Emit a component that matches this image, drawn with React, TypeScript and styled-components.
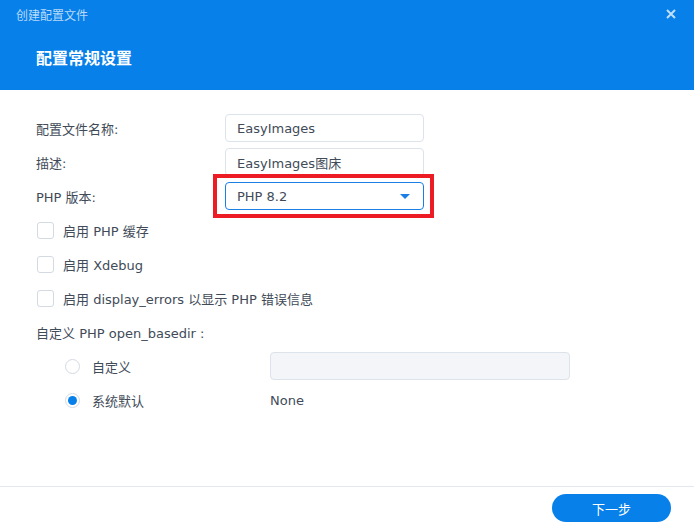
import styled, { createGlobalStyle } from "styled-components"

const Global = createGlobalStyle`
  html, body {
    margin: 0;
    padding: 0;
    background: #ffffff;
  }
  body {
    font-family: "DejaVu Sans", "Noto Sans CJK SC", sans-serif;
    color: #414b58;
  }
`

const Dialog = styled.div`
  width: 694px;
  height: 529px;
  display: flex;
  flex-direction: column;
  background: #ffffff;
  overflow: hidden;
`

const Header = styled.div`
  height: 90px;
  background: #0780ea;
  display: flex;
  flex-direction: column;
`

const TopBar = styled.div`
  height: 28px;
  display: flex;
  align-items: center;
  justify-content: space-between;
  padding: 0 18px 0 16px;
`

const WindowTitle = styled.div`
  font-family: "Noto Sans CJK SC", sans-serif;
  font-size: 12px;
  color: rgba(255, 255, 255, 0.72);
`

const Close = styled.div`
  color: rgba(255, 255, 255, 0.75);
  display: flex;
  align-items: center;
`

const Heading = styled.div`
  font-family: "Noto Sans CJK SC", sans-serif;
  font-size: 16px;
  font-weight: 700;
  color: #ffffff;
  padding: 17px 0 0 36px;
`

const Body = styled.div`
  flex: 1;
  padding: 24px 0 0 36px;
  display: flex;
  flex-direction: column;
`

const Fields = styled.div`
  display: flex;
  flex-direction: column;
  gap: 6px;
`

const FieldRow = styled.div`
  display: flex;
  align-items: center;
  height: 28px;
`

const Label = styled.div`
  width: 189px;
  font-size: 13px;
`

const Outlined = styled.div<{ $width: number; $focus?: boolean; $disabled?: boolean }>`
  box-sizing: border-box;
  width: ${({ $width }) => $width}px;
  height: 28px;
  border: 1px solid ${({ $focus }) => ($focus ? "#1a7fe4" : "#dde3ea")};
  background: ${({ $disabled }) => ($disabled ? "#f3f5f8" : "#ffffff")};
  border-radius: 4px;
  display: flex;
  align-items: center;
  justify-content: space-between;
  padding: 0 11px;
  font-size: 13px;
  color: #414b58;
`

const Highlight = styled.div`
  margin: -8px 0 -8px -12px;
  padding: 4px 6px 4px 8px;
  border: 4px solid #ed1c24;
`

const Caret = styled.div`
  width: 0;
  height: 0;
  border-left: 5px solid transparent;
  border-right: 5px solid transparent;
  border-top: 5px solid #1a7fe4;
  margin-right: 2px;
`

const Checks = styled.div`
  padding-top: 3px;
  display: flex;
  flex-direction: column;
`

const CheckRow = styled.div`
  display: flex;
  align-items: center;
  height: 34px;
  padding-left: 1px;
  font-size: 13px;
`

const Box = styled.div`
  box-sizing: border-box;
  width: 17px;
  height: 17px;
  border: 1px solid #d3dae2;
  border-radius: 3px;
  margin-right: 9px;
`

const SectionLabel = styled.div`
  height: 34px;
  display: flex;
  align-items: center;
  font-size: 13px;
`

const RadioRow = styled.div`
  display: flex;
  align-items: center;
  height: 34px;
  padding-left: 29px;
  font-size: 13px;
`

const Radio = styled.div<{ $checked?: boolean }>`
  box-sizing: border-box;
  width: 15px;
  height: 15px;
  border-radius: 50%;
  border: 1px solid #d3dae2;
  margin-right: 12px;
  display: flex;
  align-items: center;
  justify-content: center;
  &::after {
    content: "";
    width: 9px;
    height: 9px;
    border-radius: 50%;
    background: ${({ $checked }) => ($checked ? "#0780ea" : "transparent")};
  }
`

const RadioLabel = styled.div`
  width: 178px;
`

const Footer = styled.div`
  height: 42px;
  border-top: 1px solid #e3e8ee;
  display: flex;
  align-items: center;
  justify-content: flex-end;
  padding: 0 23px 0 0;
`

const PrimaryButton = styled.button`
  width: 119px;
  height: 28px;
  border: none;
  border-radius: 14px;
  background: #0780ea;
  color: #ffffff;
  font-family: "Noto Sans CJK SC", sans-serif;
  font-size: 13px;
`

export default function App() {
  return (
    <Dialog>
      <Global />
      <Header>
        <TopBar>
          <WindowTitle>创建配置文件</WindowTitle>
          <Close>
            <svg width="10" height="10" viewBox="0 0 10 10">
              <path d="M1 1L9 9M9 1L1 9" stroke="currentColor" strokeWidth="2" />
            </svg>
          </Close>
        </TopBar>
        <Heading>配置常规设置</Heading>
      </Header>
      <Body>
        <Fields>
          <FieldRow>
            <Label>配置文件名称:</Label>
            <Outlined $width={199}>EasyImages</Outlined>
          </FieldRow>
          <FieldRow>
            <Label>描述:</Label>
            <Outlined $width={199}>EasyImages图床</Outlined>
          </FieldRow>
          <FieldRow>
            <Label>PHP 版本:</Label>
            <Highlight>
              <Outlined $width={199} $focus>
                PHP 8.2
                <Caret />
              </Outlined>
            </Highlight>
          </FieldRow>
        </Fields>
        <Checks>
          <CheckRow>
            <Box />
            启用 PHP 缓存
          </CheckRow>
          <CheckRow>
            <Box />
            启用 Xdebug
          </CheckRow>
          <CheckRow>
            <Box />
            启用 display_errors 以显示 PHP 错误信息
          </CheckRow>
          <SectionLabel>自定义 PHP open_basedir :</SectionLabel>
          <RadioRow>
            <Radio />
            <RadioLabel>自定义</RadioLabel>
            <Outlined $width={300} $disabled />
          </RadioRow>
          <RadioRow>
            <Radio $checked />
            <RadioLabel>系统默认</RadioLabel>
            None
          </RadioRow>
        </Checks>
      </Body>
      <Footer>
        <PrimaryButton>下一步</PrimaryButton>
      </Footer>
    </Dialog>
  )
}
